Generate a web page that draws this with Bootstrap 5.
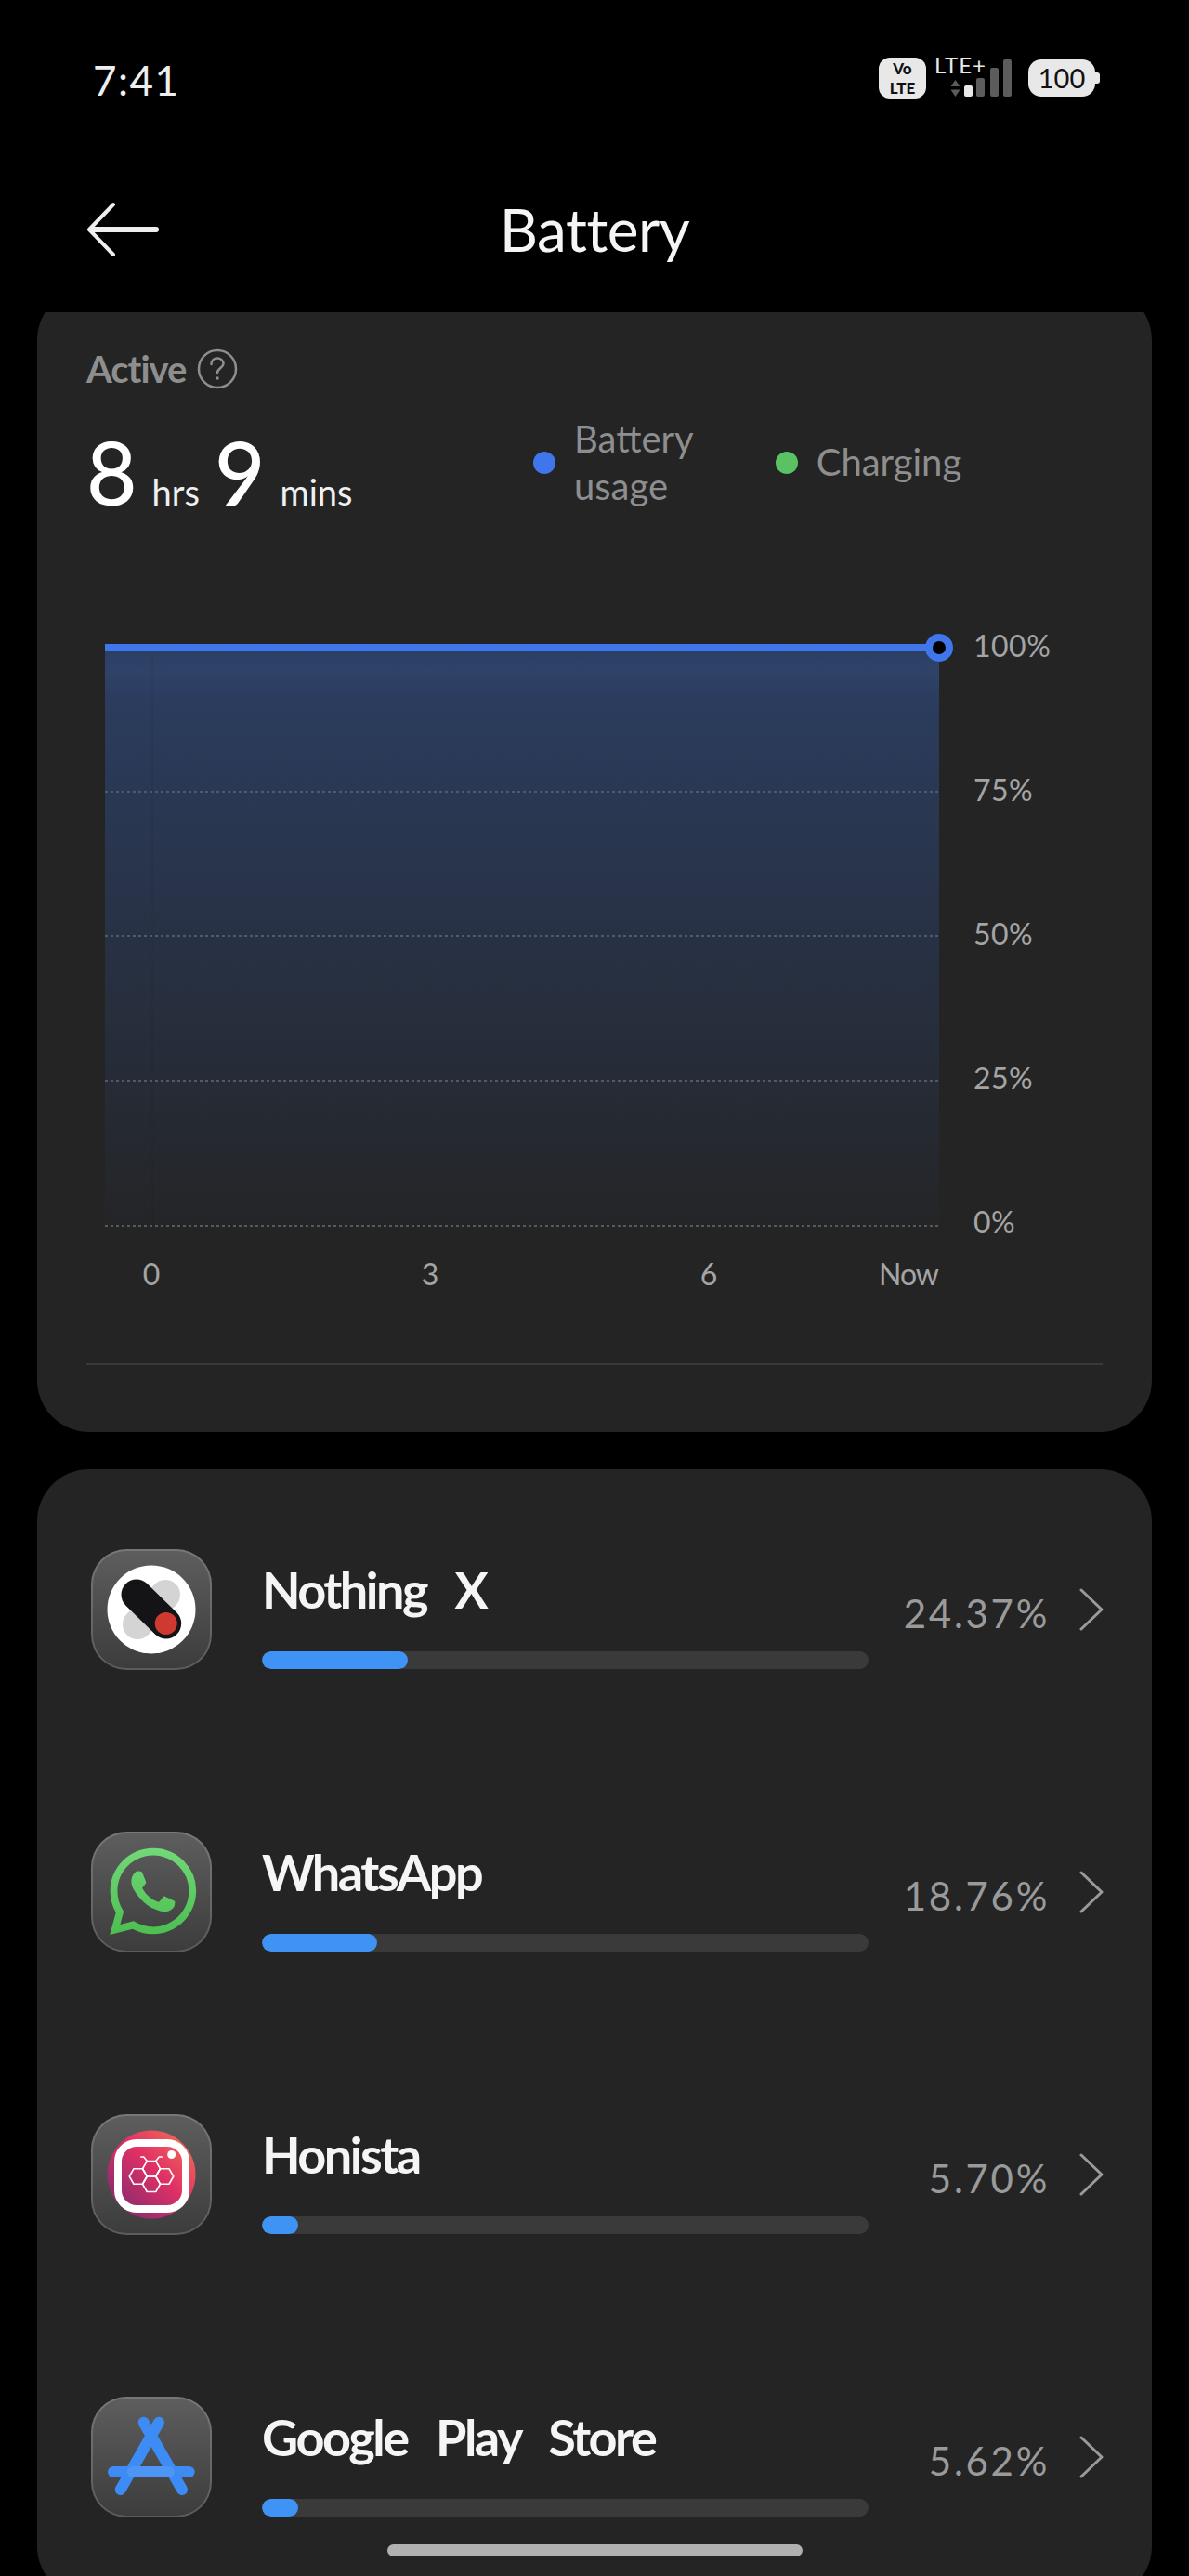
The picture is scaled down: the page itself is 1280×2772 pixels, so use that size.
<!DOCTYPE html>
<html lang="en">
<head>
    <meta charset="UTF-8">
    <title>Battery</title>
    <meta name="viewport" content="width=device-width, initial-scale=1">
    <link href="https://cdn.jsdelivr.net/npm/bootstrap@5.3.0/dist/css/bootstrap.min.css" rel="stylesheet">
    <style>
        html, body {
            background: #000;
            height: 2772px;
            overflow: hidden;
            font-family: "Lato", "Liberation Sans", sans-serif;
            color: #f2f2f2;
        }
        .phone { position: relative; height: 2772px; overflow: hidden; }

        /* status bar */
        .status-bar { height: 120px; padding: 60px 96px 0 100px; }
        .clock { font-size: 44px; line-height: 52px; letter-spacing: 1.5px; color: #eee; font-weight: 400; }
        .volte {
            width: 51px; height: 44px; background: #e8e8e8; color: #111; border-radius: 12px;
            font-weight: 900; text-align: center; padding-top: 1px;
            margin-top: 2px; margin-right: 9px;
            font-size: 17px; line-height: 21px;
        }
        .net-col { width: 54px; margin-right: 4px; }
        .net-name { font-size: 24px; line-height: 20px; color: #e8e8e8; letter-spacing: 1px; white-space: nowrap; }
        .sig-bar { width: 9px; border-radius: 2px; background: #5c5c5c; }
        .sig-bar.on { background: #e8e8e8; }
        .batt {
            width: 72px; height: 40px; background: #e8e8e8; color: #111; border-radius: 14px;
            font-size: 29px; line-height: 40px; text-align: center; margin-left: 18px; margin-top: 4px;
        }
        .batt-nub { width: 5px; height: 12px; background: #e8e8e8; border-radius: 0 3px 3px 0; margin-top: 18px; }

        /* header */
        .top-bar { height: 216px; position: relative; }
        .back-arrow { margin: 97px 0 0 92px; }
        .screen-title {
            font-size: 64px; line-height: 80px; color: #f5f5f5; padding-top: 87px; letter-spacing: -.5px;
        }

        /* cards */
        .scroll-area { height: 2436px; overflow: hidden; padding: 0 40px; }
        .panel { background: #242424; border-radius: 56px; border: 0; color: inherit; }
        .panel-chart { margin-top: -26px; height: 1231px; padding: 62px 53px 0; }
        .panel-apps { margin-top: 40px; }

        .active-row { font-size: 40px; line-height: 50px; color: #8e8e8e; font-weight: 700; letter-spacing: -1px; }
        .stat-row { height: 102px; margin-top: 27px; }
        .stat-num { font-size: 94px; line-height: 102px; color: #fff; font-weight: 500; padding-top: 8px; }
        .stat-unit { font-size: 38px; color: #f0f0f0; }
        .legend-wrap { margin-left: 221px; margin-top: -5px; font-size: 40px; line-height: 51px; color: #8e8e8e; }
        .legend-dot { width: 24px; height: 24px; border-radius: 50%; flex: none; }

        .chart-wrap { margin: 129px 0 0 20px; }
        .y-labels { height: 660px; margin: -5px 0 0 20px; font-size: 32px; line-height: 40px; color: #a4a4a4; letter-spacing: .5px; }
        .x-labels { margin: 16px 0 0 20px; gap: 200px; font-size: 32px; line-height: 40px; color: #a4a4a4; }
        .x-tick { width: 100px; text-align: center; }
        .x-now { width: 97px; text-align: right; margin-left: -100px; letter-spacing: -1px; }
        .rule-line { height: 2px; background: #3a3a3a; margin-top: 76px; }

        /* app rows */
        .app-list { margin-top: -1px; }
        .app-row {
            height: 304px; background: transparent; border: 0; color: inherit;
            padding: 0 52px 0 58px;
        }
        .app-tile {
            width: 130px; height: 130px; border-radius: 38px; flex: none; overflow: hidden;
            background: linear-gradient(#5e5e5e, #3c3c3c);
            box-shadow: inset 0 0 0 2px rgba(255,255,255,.16);
        }
        .app-main { width: 653px; height: 127px; margin-left: 54px; }
        .app-name { font-size: 54px; line-height: 84px; color: #f5f5f5; font-weight: 700; letter-spacing: -2.500px; word-spacing: 20px; }
        .usage-track { height: 19px; background: #3a3a3a; border-radius: 10px; overflow: hidden; }
        .usage-fill { height: 100%; background: #3f93f5; border-radius: 10px; }
        .app-pct { flex: 1; text-align: right; font-size: 42px; letter-spacing: 2.700px; color: #9a9a9a; margin-top: 8px; }
        .app-chev { margin-left: 30px; flex: none; }

        .home-pill {
            position: absolute; left: 417px; top: 2738px; width: 447px; height: 13px;
            border-radius: 7px; background: #b0b0b0;
        }
    </style>
</head>
<body>
<div class="phone">
    <div class="status-bar d-flex justify-content-between align-items-start">
        <div class="clock">7:41</div>
        <div class="d-flex align-items-start">
            <div class="volte">Vo<br>LTE</div>
            <div class="net-col">
                <div class="net-name">LTE+</div>
                <div class="d-flex justify-content-end align-items-end gap-1" style="height:24px">
                    <svg width="11" height="18" viewBox="0 0 11 18"><path d="M5.5 0L10.500 7H.5zM5.500 18L.5 10.500H10.500z" fill="#5c5c5c"/></svg>
                    <div class="sig-bar on" style="height:12px"></div>
                    <div class="sig-bar" style="height:20px"></div>
                </div>
            </div>
            <div class="d-flex align-items-end gap-1" style="height:44px;margin-left:2px">
                <div class="sig-bar" style="height:31px"></div>
                <div class="sig-bar" style="height:40px;margin-left:1px"></div>
            </div>
            <div class="batt">100</div>
            <div class="batt-nub"></div>
        </div>
    </div>

    <div class="top-bar d-flex">
        <svg class="back-arrow position-absolute" width="82" height="60" viewBox="0 0 82 60">
            <path d="M30 3L4 30L30 57" fill="none" stroke="#eee" stroke-width="4" stroke-linecap="round" stroke-linejoin="round"/>
            <path d="M6 30H76" stroke="#eee" stroke-width="6" stroke-linecap="round"/>
        </svg>
        <div class="screen-title w-100 text-center">Battery</div>
    </div>

    <div class="scroll-area">
        <div class="card panel panel-chart">
            <div class="active-row d-flex align-items-center gap-2">
                <span>Active</span>
                <svg width="44" height="44" viewBox="0 0 44 44" class="ms-1">
                    <circle cx="22" cy="22" r="20" fill="none" stroke="#8e8e8e" stroke-width="2.500"/>
                    <path d="M15.500 17c0-4 3-6.500 6.500-6.500s6.500 2.500 6.500 6c0 4-6.500 5-6.500 9.500" fill="none" stroke="#8e8e8e" stroke-width="2.500" stroke-linecap="round"/>
                    <circle cx="22" cy="32" r="1.800" fill="#8e8e8e"/>
                </svg>
            </div>
            <div class="stat-row d-flex">
                <div class="d-flex align-items-baseline" style="width:260px">
                    <span class="stat-num">8</span><span class="stat-unit ms-3">hrs</span>
                    <span class="stat-num ms-3">9</span><span class="stat-unit" style="margin-left:16px">mins</span>
                </div>
                <div class="legend-wrap d-flex align-items-center">
                    <span class="legend-dot" style="background:#4076ec"></span>
                    <span style="margin-left:20px">Battery<br>usage</span>
                    <span class="legend-dot" style="background:#5ac263;margin-left:88px"></span>
                    <span style="margin-left:20px">Charging</span>
                </div>
            </div>

            <div class="chart-wrap d-flex">
                <svg width="915" height="642" viewBox="0 0 915 642">
                    <defs>
                        <linearGradient id="areaFill" x1="0" y1="0" x2="0" y2="1">
                            <stop offset="0" stop-color="#2b3e62"/>
                            <stop offset=".04" stop-color="#2f4369"/>
                            <stop offset=".09" stop-color="#2b3c5d"/>
                            <stop offset="1" stop-color="#242527"/>
                        </linearGradient>
                    </defs>
                    <rect x="0" y="17" width="898" height="622" fill="url(#areaFill)"/>
                    <line x1="51" y1="17" x2="51" y2="639" stroke="#000" stroke-opacity=".08" stroke-width="1"/>
                    <g stroke-width="2" stroke-dasharray="3 3" stroke="#4d5a70">
                        <line x1="0" y1="172" x2="898" y2="172"/>
                        <line x1="0" y1="327" x2="898" y2="327"/>
                        <line x1="0" y1="483" x2="898" y2="483"/>
                    </g>
                    <line x1="0" y1="639" x2="898" y2="639" stroke="#5a5a5a" stroke-width="2" stroke-dasharray="3 3"/>
                    <line x1="0" y1="17" x2="898" y2="17" stroke="#4076ec" stroke-width="8"/>
                    <circle cx="898" cy="17" r="11" fill="#000" stroke="#4076ec" stroke-width="8"/>
                </svg>
                <div class="y-labels d-flex flex-column justify-content-between">
                    <span>100%</span><span>75%</span><span>50%</span><span>25%</span><span>0%</span>
                </div>
            </div>
            <div class="x-labels d-flex">
                <span class="x-tick">0</span><span class="x-tick">3</span><span class="x-tick">6</span><span class="x-now">Now</span>
            </div>
            <div class="rule-line"></div>
        </div>

        <div class="card panel panel-apps">
            <div class="list-group list-group-flush app-list">
                <div class="list-group-item app-row d-flex align-items-center">
                    <div class="app-tile">
                        <svg width="130" height="130" viewBox="0 0 130 130">
                            <circle cx="65" cy="65" r="47.500" fill="#fff"/>
                            <path d="M80 49L50 81" stroke="#d4d4d4" stroke-width="32" stroke-linecap="round"/>
                            <path d="M49 49L80.700 80" stroke="#141416" stroke-width="33" stroke-linecap="round"/>
                            <circle cx="80.700" cy="80" r="12" fill="#cf3a30"/>
                        </svg>
                    </div>
                    <div class="app-main d-flex flex-column justify-content-between">
                        <div class="app-name">Nothing X</div>
                        <div class="usage-track"><div class="usage-fill" style="width:24%"></div></div>
                    </div>
                    <div class="app-pct">24.37%</div>
                    <svg class="app-chev" width="28" height="46" viewBox="0 0 28 46"><path d="M4 2L26 23L4 44" fill="none" stroke="#9a9a9a" stroke-width="3" stroke-linecap="round" stroke-linejoin="round"/></svg>
                </div>
                <div class="list-group-item app-row d-flex align-items-center">
                    <div class="app-tile">
                        <svg width="130" height="130" viewBox="0 0 130 130">
                            <defs>
                                <linearGradient id="waFill" x1="0" y1="0" x2="0" y2="1">
                                    <stop offset="0" stop-color="#72d878"/>
                                    <stop offset="1" stop-color="#4cbf50"/>
                                </linearGradient>
                            </defs>
                            <path transform="translate(20 17.700) scale(3.890)" fill="url(#waFill)" d="M17.472 14.382c-.297-.149-1.758-.867-2.03-.967-.273-.099-.471-.148-.67.15-.197.297-.767.966-.94 1.164-.173.199-.347.223-.644.075-.297-.15-1.255-.463-2.39-1.475-.883-.788-1.48-1.761-1.653-2.059-.173-.297-.018-.458.13-.606.134-.133.298-.347.446-.52.149-.174.198-.298.298-.497.099-.198.05-.371-.025-.52-.075-.149-.669-1.612-.916-2.207-.242-.579-.487-.5-.669-.51-.173-.008-.371-.01-.57-.01-.198 0-.52.074-.792.372-.272.297-1.04 1.016-1.04 2.479 0 1.462 1.065 2.875 1.213 3.074.149.198 2.096 3.2 5.077 4.487.709.306 1.262.489 1.694.625.712.227 1.36.195 1.871.118.571-.085 1.758-.719 2.006-1.413.248-.694.248-1.289.173-1.413-.074-.124-.272-.198-.57-.347m-5.421 7.403h-.004a9.87 9.87 0 01-5.031-1.378l-.361-.214-3.741.982.998-3.648-.235-.374a9.86 9.86 0 01-1.51-5.26c.001-5.45 4.436-9.884 9.888-9.884 2.64 0 5.122 1.03 6.988 2.898a9.825 9.825 0 012.893 6.994c-.003 5.45-4.437 9.884-9.885 9.884m8.413-18.297A11.815 11.815 0 0012.05 0C5.495 0 .16 5.335.157 11.892c0 2.096.547 4.142 1.588 5.945L.057 24l6.305-1.654a11.882 11.882 0 005.683 1.448h.005c6.554 0 11.89-5.335 11.893-11.893a11.821 11.821 0 00-3.48-8.413z"/>
                        </svg>
                    </div>
                    <div class="app-main d-flex flex-column justify-content-between">
                        <div class="app-name">WhatsApp</div>
                        <div class="usage-track"><div class="usage-fill" style="width:19%"></div></div>
                    </div>
                    <div class="app-pct">18.76%</div>
                    <svg class="app-chev" width="28" height="46" viewBox="0 0 28 46"><path d="M4 2L26 23L4 44" fill="none" stroke="#9a9a9a" stroke-width="3" stroke-linecap="round" stroke-linejoin="round"/></svg>
                </div>
                <div class="list-group-item app-row d-flex align-items-center">
                    <div class="app-tile">
                        <svg width="130" height="130" viewBox="0 0 130 130">
                            <defs>
                                <linearGradient id="honFill" x1="0" y1="1" x2="1" y2="0">
                                    <stop offset="0" stop-color="#6e2a70"/>
                                    <stop offset=".55" stop-color="#e03066"/>
                                    <stop offset="1" stop-color="#f4794f"/>
                                </linearGradient>
                            </defs>
                            <circle cx="65" cy="65" r="47.500" fill="url(#honFill)"/>
                            <rect x="29" y="31" width="73" height="71" rx="20" fill="none" stroke="#fff" stroke-width="8"/>
                            <circle cx="86.700" cy="43.500" r="4.500" fill="#fff"/>
                            <g fill="none" stroke="#fff" stroke-width="1.600" stroke-linejoin="round" stroke-linecap="round">
                                <path d="M60.250 50.500h9.500l4.750 8.250-4.750 8.250h-9.500l-4.750-8.250z"/>
                                <path d="M46 58.750h9.500l4.750 8.250-4.750 8.250H46l-4.750-8.250z"/>
                                <path d="M74.500 58.750H84l4.750 8.250L84 75.250h-9.500L69.750 67z"/>
                                <path d="M60.250 67h9.500l4.750 8.250-4.750 8.250h-9.500l-4.750-8.250z"/>
                                <path d="M60.250 50.500l-3.500-4.500h-3M69.750 50.500l3.500-4.500h3"/>
                            </g>
                        </svg>
                    </div>
                    <div class="app-main d-flex flex-column justify-content-between">
                        <div class="app-name">Honista</div>
                        <div class="usage-track"><div class="usage-fill" style="width:6%"></div></div>
                    </div>
                    <div class="app-pct">5.70%</div>
                    <svg class="app-chev" width="28" height="46" viewBox="0 0 28 46"><path d="M4 2L26 23L4 44" fill="none" stroke="#9a9a9a" stroke-width="3" stroke-linecap="round" stroke-linejoin="round"/></svg>
                </div>
                <div class="list-group-item app-row d-flex align-items-center">
                    <div class="app-tile">
                        <svg width="130" height="130" viewBox="0 0 130 130">
                            <g stroke-width="12" stroke-linecap="round" fill="none">
                                <path d="M31.700 100L73 27.700" stroke="#3d8bf5"/>
                                <path d="M24 81H105.700" stroke="#3d8bf5"/>
                                <path d="M56.700 27.700L98 100" stroke="#3d8bf5"/>
                                <path d="M45 81H84" stroke="#5a9ff7" stroke-opacity=".6"/>
                            </g>
                        </svg>
                    </div>
                    <div class="app-main d-flex flex-column justify-content-between">
                        <div class="app-name">Google Play Store</div>
                        <div class="usage-track"><div class="usage-fill" style="width:6%"></div></div>
                    </div>
                    <div class="app-pct">5.62%</div>
                    <svg class="app-chev" width="28" height="46" viewBox="0 0 28 46"><path d="M4 2L26 23L4 44" fill="none" stroke="#9a9a9a" stroke-width="3" stroke-linecap="round" stroke-linejoin="round"/></svg>
                </div>
            </div>
        </div>
    </div>

    <div class="home-pill"></div>
</div>
<script src="https://cdn.jsdelivr.net/npm/bootstrap@5.3.0/dist/js/bootstrap.bundle.min.js"></script>
</body>
</html>
